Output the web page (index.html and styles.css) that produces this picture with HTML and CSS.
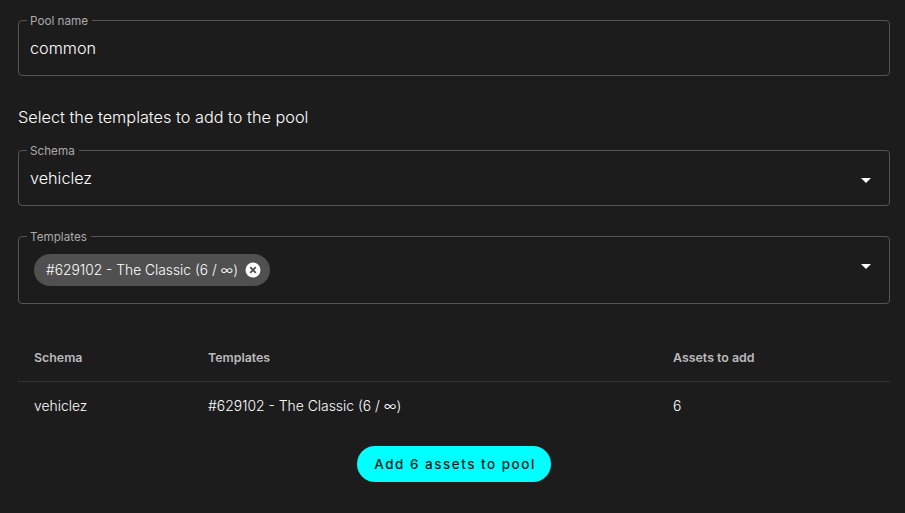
FILE: index.html
```html
<!DOCTYPE html>
<html lang="en">
<head>
    <meta charset="UTF-8">
    <title>Add assets to pool</title>
    <link rel="stylesheet" href="styles.css">
</head>
<body>
    <form class="pool-form">
        <fieldset class="field">
            <legend>Pool name</legend>
            <div class="field-value">common</div>
        </fieldset>

        <p class="hint">Select the templates to add to the pool</p>

        <fieldset class="field field-schema">
            <legend>Schema</legend>
            <div class="field-value">vehiclez</div>
            <span class="arrow"></span>
        </fieldset>

        <fieldset class="field field-templates">
            <legend>Templates</legend>
            <div class="chip">
                <span>#629102 - The Classic (6 / ∞)</span>
                <svg class="chip-close" width="16" height="16" viewBox="0 0 16 16">
                    <circle cx="8" cy="8" r="7.5" fill="#fff"/>
                    <path d="M5.2 5.2l5.6 5.6M10.8 5.2l-5.6 5.6" stroke="#505050" stroke-width="1.8"/>
                </svg>
            </div>
            <span class="arrow"></span>
        </fieldset>

        <table class="summary">
            <thead>
                <tr>
                    <th class="col-schema">Schema</th>
                    <th class="col-templates">Templates</th>
                    <th>Assets to add</th>
                </tr>
            </thead>
            <tbody>
                <tr>
                    <td>vehiclez</td>
                    <td>#629102 - The Classic (6 / ∞)</td>
                    <td>6</td>
                </tr>
            </tbody>
        </table>

        <div class="actions">
            <button type="button" class="submit">Add 6 assets to pool</button>
        </div>
    </form>
</body>
</html>
```

FILE: styles.css
```css
* {
    box-sizing: border-box;
}
body {
    margin: 0;
    background-color: #1c1c1c;
    color: #fff;
    font-family: Inter, "Liberation Sans", sans-serif;
}
.pool-form {
    padding: 13px 15px 0 18px;
}
.field {
    position: relative;
    height: 63px;
    margin: 0;
    padding: 0 11px;
    border: 1px solid #555;
    border-radius: 4px;
    min-width: 0;
}
.field legend {
    padding: 2px 4px 0 3px;
    margin-left: -3px;
    font-size: 11.7px;
    line-height: 12px;
    color: #aaa;
}
.field-value {
    padding-top: 11px;
    font-size: 16.2px;
    line-height: 20px;
    font-weight: 300;
}
.hint {
    margin: 31px 0 16px;
    font-size: 16.3px;
    line-height: 20px;
    font-weight: 300;
}
.field-schema {
    margin-bottom: 23px;
}
.field-templates {
    height: 75px;
    padding-left: 15px;
}
.field-templates legend {
    margin-left: -7px;
}
.arrow {
    position: absolute;
    right: 18px;
    top: 21px;
    width: 0;
    height: 0;
    border-left: 5px solid transparent;
    border-right: 5px solid transparent;
    border-top: 5px solid #fff;
}
.chip {
    display: inline-flex;
    align-items: center;
    gap: 7px;
    height: 32px;
    margin-top: 11px;
    padding: 0 9px 0 12px;
    border-radius: 16px;
    background-color: #505050;
    font-size: 13.8px;
    font-weight: 300;
}
.summary {
    width: 100%;
    margin-top: 27px;
    border-collapse: collapse;
    font-size: 13.9px;
    font-weight: 300;
}
.summary th {
    height: 50px;
    padding: 4px 16px 0;
    border-bottom: 1px solid #333;
    text-align: left;
    font-size: 12.4px;
    font-weight: 600;
    color: #bbb;
}
.summary td {
    height: 49px;
    padding: 0 16px;
}
.col-schema {
    width: 174px;
}
.col-templates {
    width: 465px;
}
.actions {
    display: flex;
    justify-content: center;
    margin-top: 16px;
}
.submit {
    width: 194px;
    height: 36px;
    padding: 0 0 0 2px;
    border: none;
    border-radius: 18px;
    background-color: #00ffff;
    color: #1c1c1c;
    font-family: inherit;
    font-size: 13.5px;
    font-weight: 500;
    letter-spacing: 1.5px;
}
```
